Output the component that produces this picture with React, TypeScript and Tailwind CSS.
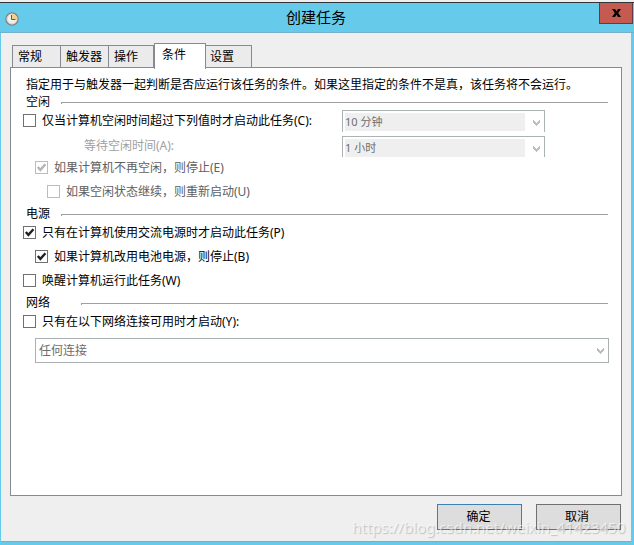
import { type ReactNode } from "react";
import clsx from "clsx";

type CheckRowProps = {
  label: string;
  checked?: boolean;
  disabled?: boolean;
  className?: string;
};

const CheckRow = ({ label, checked, disabled, className }: CheckRowProps) => {
  return (
    <label
      className={clsx(
        "flex h-[13px] items-center gap-[6px]",
        disabled ? "text-[#606060]" : "text-black",
        className
      )}
    >
      <span
        className={clsx(
          "flex h-[13px] w-[13px] shrink-0 border bg-white",
          disabled ? "border-[#bcbcbc]" : "border-[#707070]"
        )}
      >
        {checked && (
          <svg viewBox="0 0 11 11" className="h-[11px] w-[11px]">
            <path
              d="M1.8 5 L4.4 7.9 L9.4 2.3"
              fill="none"
              stroke={disabled ? "#b4b4b4" : "#212121"}
              strokeWidth="2.4"
            />
          </svg>
        )}
      </span>
      <span className="leading-[13px] whitespace-nowrap">{label}</span>
    </label>
  );
};

const Chevron = () => (
  <svg
    viewBox="0 0 7 6"
    className="h-[6px] w-[7px] shrink-0"
    shapeRendering="crispEdges"
  >
    <path
      d="M0 0h1v1h1v1h1v1h1v-1h1v-1h1v-1h1v3h-1v1h-1v1h-1v1h-1v-1h-1v-1h-1v-1h-1z"
      fill="#bdbdbd"
    />
  </svg>
);

type SectionProps = {
  title: string;
  lineClassName: string;
  className?: string;
};

const SectionTitle = ({ title, lineClassName, className }: SectionProps) => (
  <div className={clsx("flex h-[17px] pr-[13px] pl-[15px]", className)}>
    <span className="w-6 leading-[17px]">{title}</span>
    <span
      className={clsx(
        "mt-[9px] h-[2px] flex-1 border-t border-l border-[#a0a0a0]",
        lineClassName
      )}
    />
  </div>
);

const TimeSelect = ({ value, className }: { value: string; className: string }) => (
  <div
    className={clsx(
      "flex w-[203px] shrink-0 border border-b-0 border-[#abb3b3] pt-[2px] pl-[2px] text-[11px] text-[#6d6d6d]",
      className
    )}
  >
    <span className="h-[18px] w-[180px] bg-[#efefef] leading-[17px]">
      {value}
    </span>
    <span className="ml-2 pt-[7px]">
      <Chevron />
    </span>
  </div>
);

const Tab = ({ children, className }: { children: ReactNode; className: string }) => (
  <div
    className={clsx(
      "h-[22px] border border-b-0 border-[#898994] bg-[#ebebeb] leading-[22px]",
      className
    )}
  >
    {children}
  </div>
);

const ClockIcon = () => (
  <svg viewBox="0 0 14 14" className="h-[14px] w-[14px]">
    <circle cx="7" cy="7" r="6.1" fill="#eef0ef" stroke="#85817c" strokeWidth="1.3" />
    <circle cx="7" cy="7" r="4.9" fill="none" stroke="#c9c7c2" strokeWidth="0.7" />
    <path d="M7 7V1.8A5.2 5.2 0 0 1 12.2 7z" fill="#f5cf86" />
    <path d="M6.5 3v4.5h4" fill="none" stroke="#5f5a50" strokeWidth="1" />
  </svg>
);

export default function App() {
  return (
    <div className="relative flex h-[545px] w-[634px] flex-col overflow-hidden bg-[#66cbea] font-['Noto_Sans','Noto_Sans_CJK_SC',sans-serif] text-[12px] text-black">
      <div className="h-[3px] shrink-0 border-b border-[#2f3538] bg-[#efefef]" />
      <header className="flex h-[30px] shrink-0 border-b border-[#74b0c8]">
        <div className="w-[33px] pt-[9px] pl-[5px]">
          <ClockIcon />
        </div>
        <h1 className="flex-1 text-center text-[15px] leading-[29px]">
          创建任务
        </h1>
        <button className="mr-[1px] flex h-[21px] w-[34px] items-center justify-center border border-t-0 border-[#653a42] bg-[#c45a50]">
          <svg viewBox="0 0 9 8" className="h-[8px] w-[9px]">
            <path d="M0 0h3l1.5 2.3L6 0h3L6.2 4 9 8H6L4.5 5.7 3 8H0l2.8-4z" fill="#000" />
          </svg>
        </button>
      </header>

      <main className="mr-[3px] ml-[1px] flex h-[509px] shrink-0 flex-col border-b border-[#74b0c8] bg-[#efefef] px-[9px]">
        <nav className="flex h-[34px] shrink-0 items-end pl-[2px]">
          <Tab className="w-[49px] pl-[5px]">常规</Tab>
          <Tab className="-ml-px w-[49px] pl-[5px]">触发器</Tab>
          <Tab className="-ml-px w-[46px] pl-[5px]">操作</Tab>
          <div className="z-10 -mr-px -mb-[2px] h-[26px] w-[52px] border border-b-0 border-[#898994] bg-white pl-[7px] leading-[22px]">
            条件
          </div>
          <Tab className="w-[47px] pl-[4px]">设置</Tab>
        </nav>

        <section className="h-[429px] w-[612px] shrink-0 border border-[#898994] bg-white pt-[8px]">
          <p className="pl-[15px] leading-[17px] whitespace-nowrap">
            指定用于与触发器一起判断是否应运行该任务的条件。如果这里指定的条件不是真，该任务将不会运行。
          </p>
          <SectionTitle title="空闲" lineClassName="ml-[11px]" />
          <div className="flex h-[26px] pl-[12px]">
            <CheckRow
              label="仅当计算机空闲时间超过下列值时才启动此任务(C):"
              className="mt-[4px] w-[319px]"
            />
            <TimeSelect value="10 分钟" className="h-[22px]" />
          </div>
          <div className="flex h-[21px] pl-[73px]">
            <span className="w-[258px] leading-[19px] text-[#a0a0a0]">
              等待空闲时间(A):
            </span>
            <TimeSelect value="1 小时" className="h-[21px]" />
          </div>
          <CheckRow
            label="如果计算机不再空闲，则停止(E)"
            checked
            disabled
            className="mt-[4px] pl-[24px]"
          />
          <CheckRow
            label="如果空闲状态继续，则重新启动(U)"
            disabled
            className="mt-[11px] pl-[36px]"
          />
          <SectionTitle title="电源" lineClassName="ml-[11px]" className="mt-[7px]" />
          <CheckRow
            label="只有在计算机使用交流电源时才启动此任务(P)"
            checked
            className="mt-[4px] pl-[12px]"
          />
          <CheckRow
            label="如果计算机改用电池电源，则停止(B)"
            checked
            className="mt-[11px] pl-[24px]"
          />
          <CheckRow label="唤醒计算机运行此任务(W)" className="mt-[11px] pl-[12px]" />
          <SectionTitle title="网络" lineClassName="ml-[31px]" className="mt-[7px]" />
          <CheckRow
            label="只有在以下网络连接可用时才启动(Y):"
            className="mt-[4px] pl-[12px]"
          />
          <div className="mt-[10px] ml-[24px] flex h-[25px] w-[574px] items-center justify-between border border-[#abb0b3] pr-[4px] pl-[3px] text-[#6d6d6d]">
            <span>任何连接</span>
            <Chevron />
          </div>
        </section>

        <footer className="flex justify-end gap-[14px] pt-[8px] pr-px">
          <button className="h-[26px] w-[85px] border border-[#3c7fb1] bg-[#dddddd] pr-[2px] leading-[24px]">
            确定
          </button>
          <button className="h-[26px] w-[85px] border border-[#707070] bg-[#dddddd] pr-[3px] leading-[24px]">
            取消
          </button>
        </footer>
      </main>

      <span className="absolute top-[516px] left-[352px] font-['Noto_Sans',sans-serif] text-[15px] leading-[22px] whitespace-nowrap text-white/60 [text-shadow:1px_1px_1px_rgba(0,0,0,0.2)]">
        https://blog.csdn.net/weixin_41423450
      </span>
    </div>
  );
}
